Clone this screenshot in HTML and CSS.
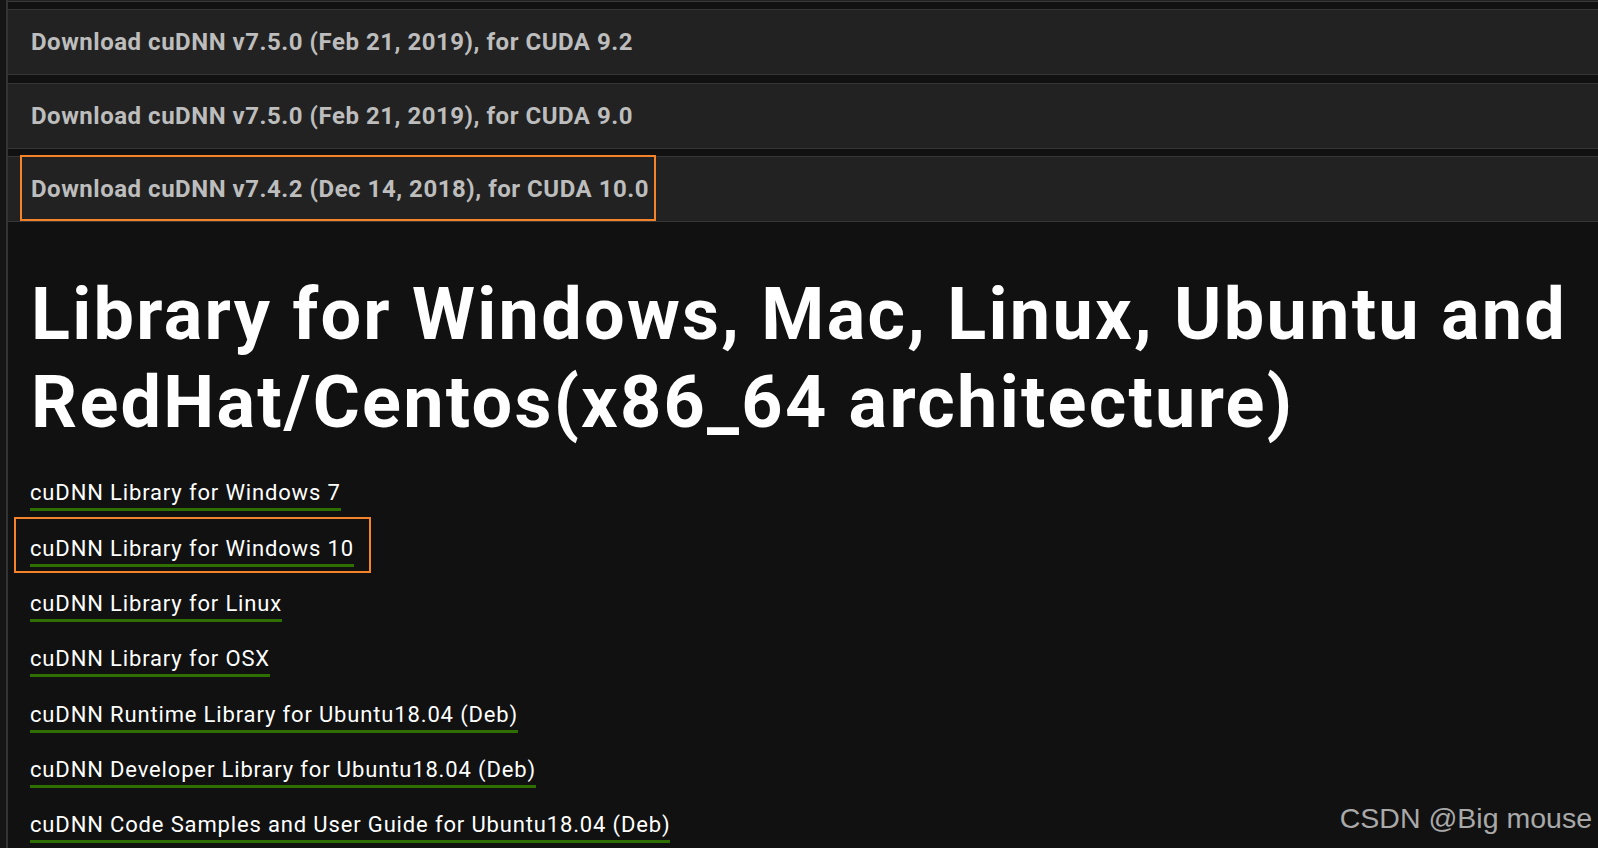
FILE: index.html
```html
<!DOCTYPE html>
<html lang="en">
<head>
<meta charset="utf-8">
<title>cuDNN Archive</title>
<link rel="stylesheet" href="styles.css">
</head>
<body>
<div class="page">
  <div class="panel-cut"></div>
  <div class="panels">
    <div class="panel"><span class="panel-title">Download cuDNN v7.5.0 (Feb 21, 2019), for CUDA 9.2</span></div>
    <div class="panel"><span class="panel-title">Download cuDNN v7.5.0 (Feb 21, 2019), for CUDA 9.0</span></div>
    <div class="panel"><span class="panel-title marked marked-panel">Download cuDNN v7.4.2 (Dec 14, 2018), for CUDA 10.0</span></div>
  </div>
  <h1 class="heading">Library for Windows, Mac, Linux, Ubuntu and RedHat/Centos(x86_64 architecture)</h1>
  <ul class="links">
    <li><a class="link" href="#">cuDNN Library for Windows 7</a></li>
    <li><a class="link marked marked-link" href="#">cuDNN Library for Windows 10</a></li>
    <li><a class="link" href="#">cuDNN Library for Linux</a></li>
    <li><a class="link" href="#">cuDNN Library for OSX</a></li>
    <li><a class="link" href="#">cuDNN Runtime Library for Ubuntu18.04 (Deb)</a></li>
    <li><a class="link" href="#">cuDNN Developer Library for Ubuntu18.04 (Deb)</a></li>
    <li><a class="link" href="#">cuDNN Code Samples and User Guide for Ubuntu18.04 (Deb)</a></li>
  </ul>
</div>
<div class="watermark">CSDN @Big mouse</div>
</body>
</html>
```
FILE: styles.css
```css
html, body {
  margin: 0;
  padding: 0;
  height: 100%;
  overflow: hidden;
}
body {
  background: #151515;
  font-family: Roboto, "Liberation Sans", sans-serif;
  position: relative;
}
.page {
  margin-left: 6px;
  border-left: 2px solid #333333;
  background: #111111;
  min-height: 100%;
}
.panel-cut {
  height: 1px;
  background: #222222;
  border-bottom: 1px solid #3a3a3a;
}
.panels {
  display: flex;
  flex-direction: column;
  gap: 7.7px;
  padding-top: 7px;
}
.panel {
  background: #222222;
  border-top: 1px solid #363636;
  border-bottom: 1px solid #363636;
  height: 64px;
  display: flex;
  align-items: center;
  padding-left: 23px;
}
.panel-title {
  color: #bdbdbd;
  font-weight: 700;
  font-size: 24px;
  line-height: 28px;
  letter-spacing: 0.52px;
}
.marked {
  position: relative;
}
.marked::after {
  content: "";
  position: absolute;
  border: 2px solid #f5832a;
}
.marked-panel::after {
  left: -11px;
  right: -7px;
  top: -20px;
  bottom: -18px;
}
.heading {
  margin: 49px 0 0 23px;
  color: #ffffff;
  font-size: 72px;
  line-height: 88px;
  font-weight: 700;
  letter-spacing: 2.25px;
}
.links {
  list-style: none;
  margin: 34px 0 0 0;
  padding: 0 0 0 22px;
  display: flex;
  flex-direction: column;
  gap: 25.3px;
}
.link {
  display: inline-block;
  color: #ffffff;
  text-decoration: none;
  font-size: 22px;
  line-height: 24px;
  letter-spacing: 0.85px;
  padding-bottom: 3px;
  border-bottom: 3px solid #2f6e00;
}
.marked-link::after {
  left: -16px;
  right: -17px;
  top: -20px;
  bottom: -9px;
}
.watermark {
  position: absolute;
  right: 6px;
  bottom: 13px;
  color: #a9a9a9;
  font-family: "Liberation Sans", Arial, sans-serif;
  font-size: 28.5px;
}
```
